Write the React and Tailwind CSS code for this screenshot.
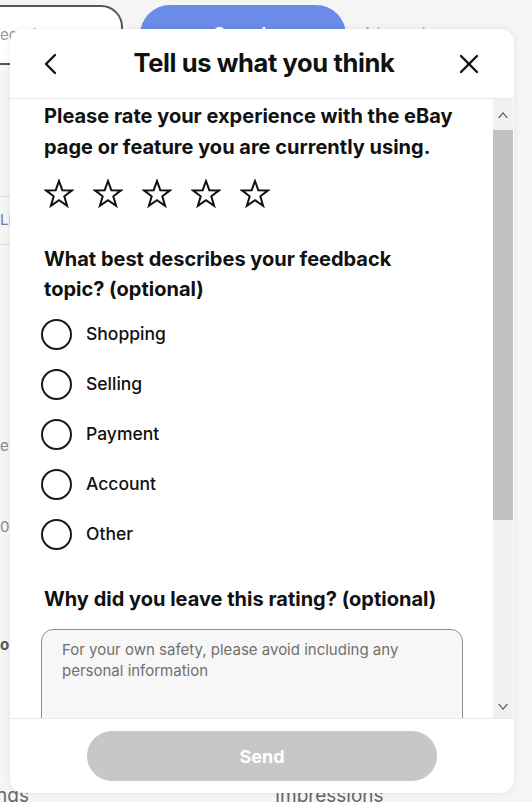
import { useState } from "react"

const TOPICS = ["Shopping", "Selling", "Payment", "Account", "Other"]

function Star() {
  return (
    <svg width="30" height="29" viewBox="0 0 30 29" fill="none" stroke="#111" strokeWidth="2" strokeLinejoin="miter">
      <polygon points="15,2 18.3,11.2 28,11.4 20.3,17.3 23.1,26.8 15,21.1 6.9,26.8 9.7,17.3 2,11.4 11.7,11.2" />
    </svg>
  )
}

export default function App() {
  const [rating, setRating] = useState(0)
  const [topic, setTopic] = useState(null)

  return (
    <div className="relative h-[802px] w-[532px] overflow-hidden bg-[#f5f5f5] font-['Inter',sans-serif]">
      {/* ── page behind the dialog ── */}
      <div className="flex items-start gap-[17px] pt-[5px]">
        <div className="ml-[-40px] flex h-[60px] w-[163px] items-center rounded-[22px] border-2 border-[#555] bg-white pl-[38px] text-[15px] text-[#999]">
          egories
        </div>
        <div className="flex h-[60px] w-[206px] items-center justify-center rounded-[30px] bg-[#6a8ce8] text-[17px] font-bold text-white">
          Search
        </div>
        <div className="pt-[18px] text-[13px] text-[#aaa]">Advanced</div>
      </div>
      <div className="flex w-[10px] flex-col overflow-hidden text-[15px] text-[#888]">
        <div className="mt-[131px] h-[49px] border-y border-[#ddd] pt-[12px] text-[#6b7da8]">Li</div>
        <div className="mt-[190px]">e</div>
        <div className="mt-[58px]">0</div>
        <div className="mt-[96px] font-bold text-[#555]">o</div>
      </div>
      <div className="absolute bottom-[-8px] left-0 flex w-full text-[19px] text-[#666]">
        <span className="ml-[-4px]">ngs</span>
        <span className="ml-[246px]">Impressions</span>
      </div>

      {/* ── dialog ── */}
      <div className="absolute left-[10px] top-[29px] flex h-[764px] w-[504px] flex-col overflow-hidden rounded-[14px] bg-white shadow-[0_0_6px_rgba(0,0,0,0.08)]">
        <header className="flex h-[70px] shrink-0 items-center justify-between border-b border-[#e8e8e8] px-[33px]">
          <button type="button" className="flex h-[24px] w-[20px] items-center">
            <svg width="14" height="22" viewBox="0 0 14 22" fill="none" stroke="#111" strokeWidth="2.4" strokeLinecap="round" strokeLinejoin="round">
              <polyline points="12,2 3,11 12,20" />
            </svg>
          </button>
          <h1 className="ml-[8px] text-[25.5px] font-bold tracking-[-0.015em] text-[#111]">Tell us what you think</h1>
          <button type="button" className="flex h-[24px] w-[24px] items-center justify-center">
            <svg width="20" height="20" viewBox="0 0 20 20" fill="none" stroke="#111" strokeWidth="2.4" strokeLinecap="round">
              <line x1="2" y1="2" x2="18" y2="18" />
              <line x1="18" y1="2" x2="2" y2="18" />
            </svg>
          </button>
        </header>

        <div className="flex min-h-0 flex-1">
          <div className="min-w-0 flex-1 overflow-hidden pl-[34px] pr-[30px]">
            <p className="mt-[2px] text-[20px] font-bold leading-[31px] text-[#111]">
              Please rate your experience with the eBay page or feature you are currently using.
            </p>
            <div className="mt-[16px] flex gap-[19px]">
              {[1, 2, 3, 4, 5].map((n) => (
                <button key={n} type="button" onClick={() => setRating(n)} aria-label={`${n} star`}>
                  <Star filled={n <= rating} />
                </button>
              ))}
            </div>
            <p className="mt-[36px] max-w-[395px] text-[20px] font-bold leading-[30px] text-[#111]">
              What best describes your feedback topic? (optional)
            </p>
            <div className="mt-[5px] flex flex-col">
              {TOPICS.map((t) => (
                <label key={t} className="flex h-[50px] items-center gap-[14px]" onClick={() => setTopic(t)}>
                  <span className="ml-[-3px] flex h-[31px] w-[31px] items-center justify-center rounded-full border-2 border-[#191919]">
                    {topic === t ? <span className="h-[15px] w-[15px] rounded-full bg-[#191919]" /> : null}
                  </span>
                  <span className="text-[17.5px] font-medium text-[#111]">{t}</span>
                </label>
              ))}
            </div>
            <p className="mt-[25px] text-[20px] font-bold leading-[30px] text-[#111]">
              Why did you leave this rating? (optional)
            </p>
            <div className="mt-[15px] ml-[-3px] h-[130px] rounded-[12px] border border-[#8f8f8f] bg-[#f7f7f7] px-[20px] pt-[9px] text-[15px] leading-[21px] text-[#707070]">
              For your own safety, please avoid including any personal information
            </div>
          </div>

          {/* scrollbar */}
          <div className="mr-[1px] flex w-[20px] shrink-0 flex-col bg-[#f1f1f1]">
            <div className="flex h-[31px] items-center justify-center">
              <svg width="10" height="6" viewBox="0 0 10 6" fill="#505050"><polygon points="0,6 5,0 10,6 8.6,6 5,1.8 1.4,6" /></svg>
            </div>
            <div className="h-[390px] bg-[#c1c1c1]" />
            <div className="flex-1" />
            <div className="flex h-[22px] items-center justify-center">
              <svg width="10" height="6" viewBox="0 0 10 6" fill="#505050"><polygon points="0,0 5,6 10,0 8.6,0 5,4.2 1.4,0" /></svg>
            </div>
          </div>
        </div>

        <footer className="flex h-[75px] shrink-0 justify-center border-t border-[#e8e8e8] pt-[12px]">
          <button type="button" disabled className="h-[50px] w-[350px] rounded-full bg-[#c7c7c7] text-[18px] font-bold text-white">
            Send
          </button>
        </footer>
      </div>
    </div>
  )
}
